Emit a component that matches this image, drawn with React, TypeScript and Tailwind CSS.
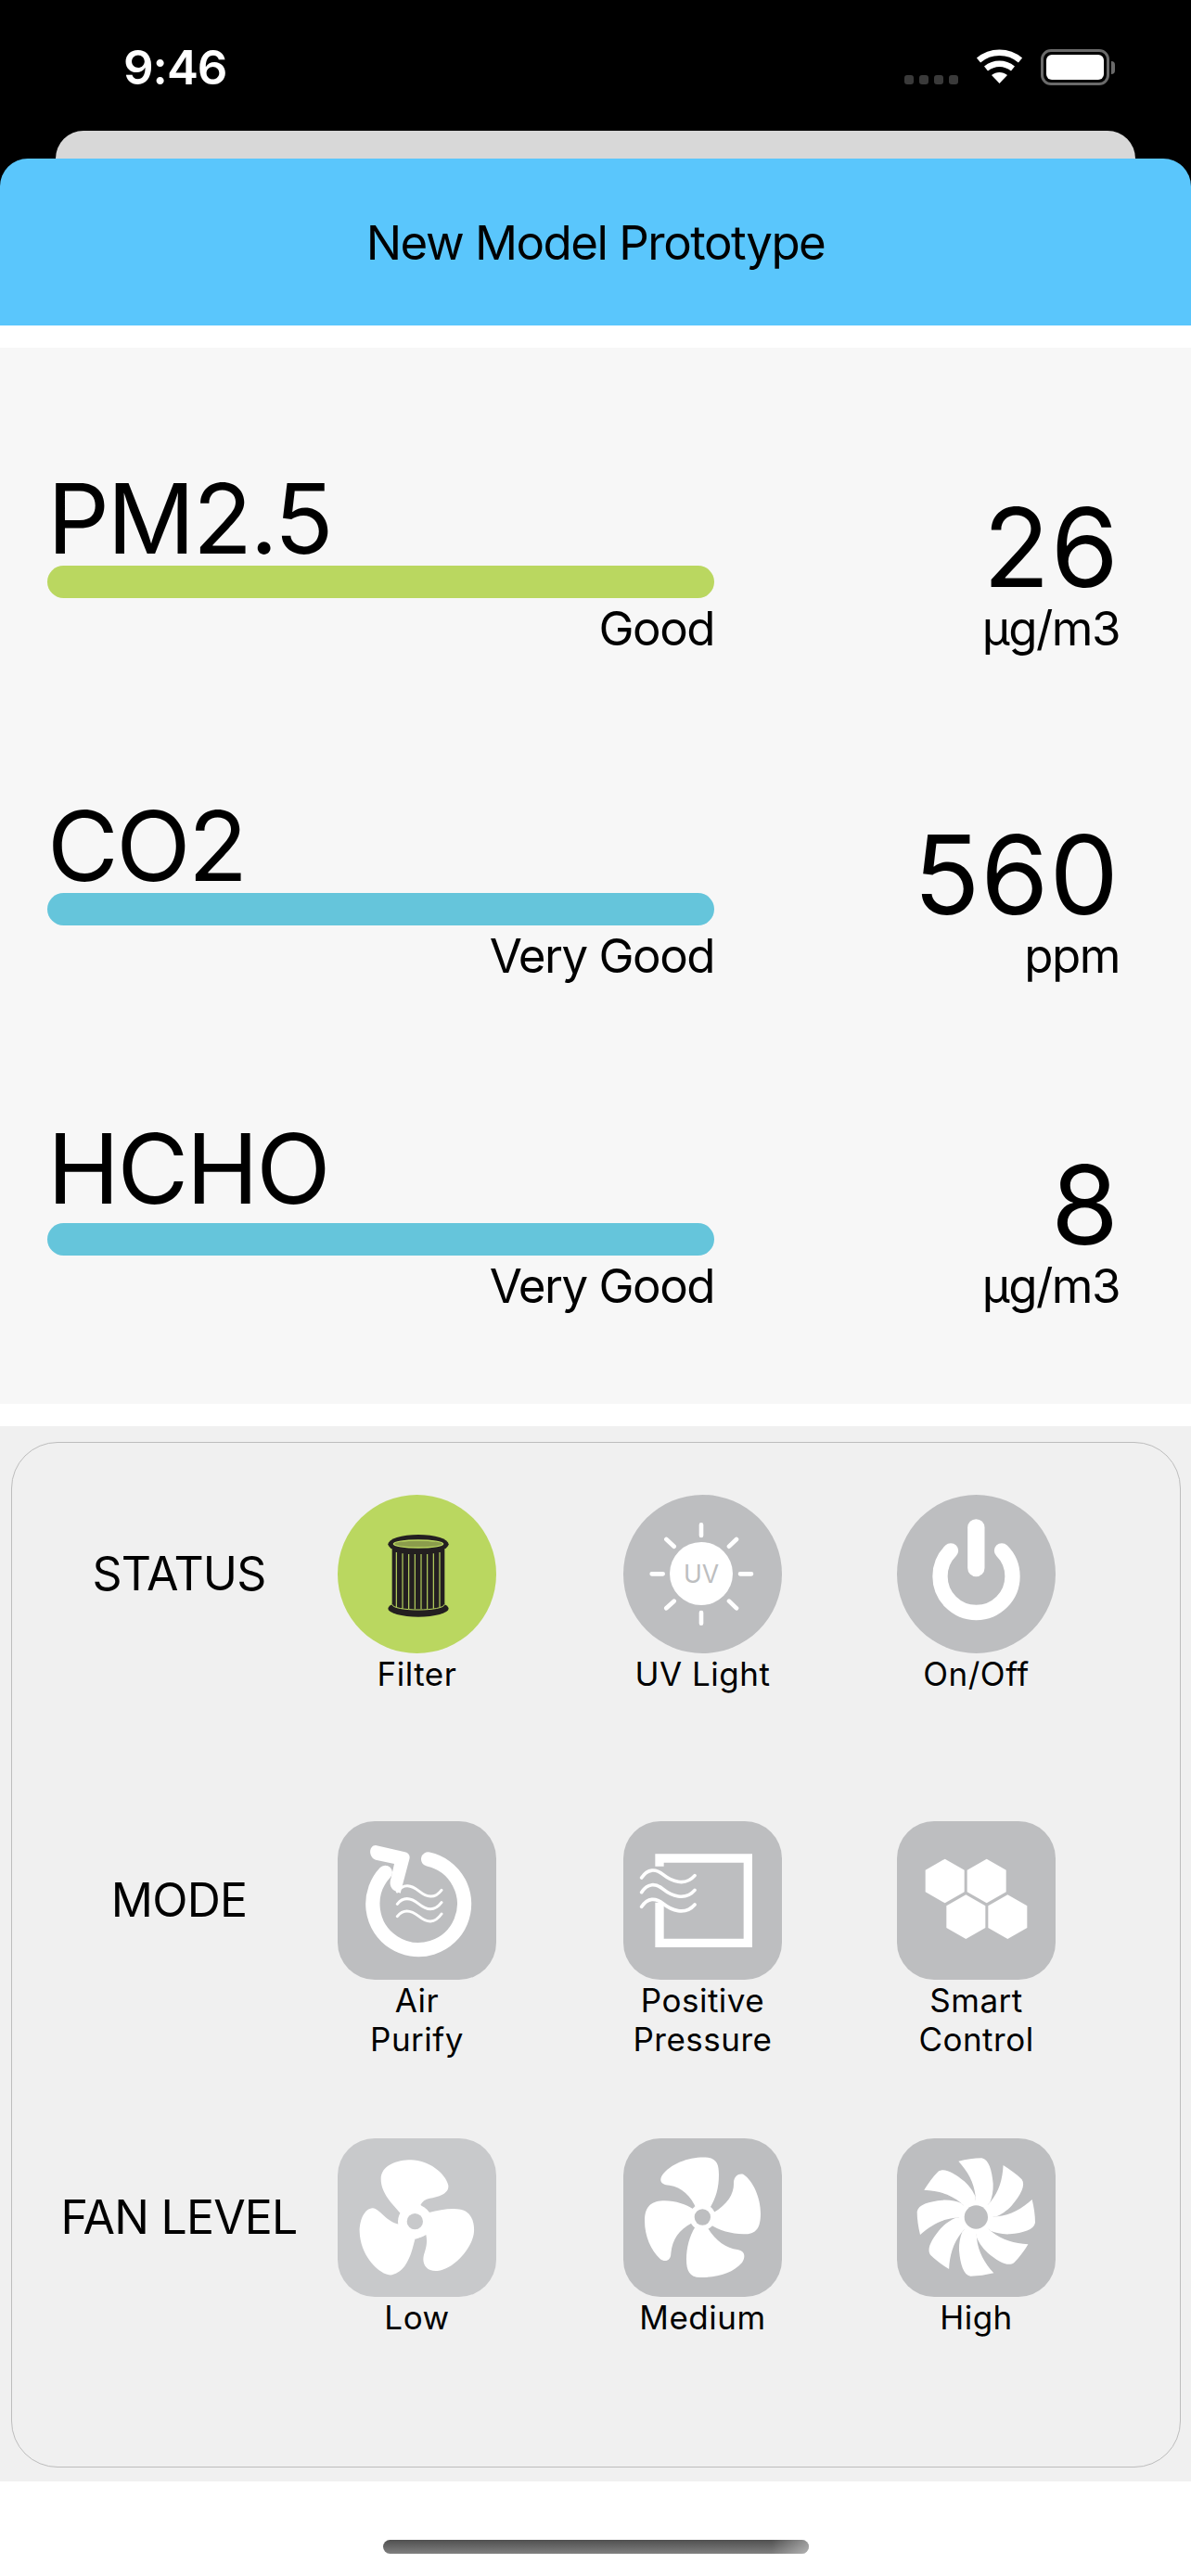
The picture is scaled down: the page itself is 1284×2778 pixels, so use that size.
const readings = [
  { name: 'PM2.5', bar: 'bg-[#bad760]', level: 'Good', value: '26', unit: 'µg/m3', rowGap: '', titleGap: '-mb-px', valueTop: 'pt-[28px]' },
  { name: 'CO2', bar: 'bg-[#65c5db]', level: 'Very Good', value: '560', unit: 'ppm', rowGap: 'mt-[156px]', titleGap: '-mb-px', valueTop: 'pt-[28px]' },
  { name: 'HCHO', bar: 'bg-[#65c5db]', level: 'Very Good', value: '8', unit: 'µg/m3', rowGap: 'mt-[151px]', titleGap: 'mb-[7px]', valueTop: 'pt-[36px]' },
];

const WHITE = '#ffffff';

const FilterIcon = () => (
  <svg viewBox="72 66 513 513" className="h-full w-full">
    <rect x="248" y="240" width="170" height="200" fill="#231f20" />
    <ellipse cx="333" cy="434" rx="98" ry="27" fill="#231f20" />
    <path d="M248 420C248 444 418 444 418 420" fill="none" stroke="#bad760" strokeWidth="3" />
    <path d="M262 252V430M282 256V434M302 258V436M322 258V436M342 258V436M362 258V436M382 256V434M402 252V430" stroke="#bad760" strokeWidth="3.5" />
    <ellipse cx="333" cy="226" rx="98" ry="31" fill="#231f20" />
    <ellipse cx="333" cy="225" rx="80" ry="12" fill="#8b9c4c" stroke="#bad760" strokeWidth="4" />
  </svg>
);

const UvIcon = () => (
  <svg viewBox="36 66 513 513" className="h-full w-full">
    <circle cx="288" cy="321" r="102" fill={WHITE} />
    <path d="M288 163V198M288 447V482M128 322H164M414 322H450M175 210L200 233M402 210L378 233M175 433L200 410M402 433L378 410" stroke={WHITE} strokeWidth="14" strokeLinecap="round" fill="none" />
    <text x="288" y="350" textAnchor="middle" fontSize="80" fill="#bdbec0" fontFamily="Inter, sans-serif">UV</text>
  </svg>
);

const PowerIcon = () => (
  <svg viewBox="921 66 513 513" className="h-full w-full">
    <path d="M1177 172V303" stroke={WHITE} strokeWidth="55" strokeLinecap="round" />
    <path d="M1095 247A117 117 0 1 0 1260 247" fill="none" stroke={WHITE} strokeWidth="49" strokeLinecap="round" />
  </svg>
);

const PurifyIcon = () => (
  <svg viewBox="72 72 513 513" className="h-full w-full">
    <path d="M365 195A148 148 0 1 1 226 238" fill="none" stroke={WHITE} strokeWidth="46" strokeLinecap="round" />
    <path d="M195 150L290 172C303 175 307 185 304 195L275 305L258 298C242 290 238 272 245 255L255 210L195 197C170 188 173 150 195 150Z" fill={WHITE} />
    <path d="M265 300C285 272 310 278 335 298S385 325 408 295M265 340C285 315 310 320 335 340S385 365 408 335M265 380C285 355 310 360 335 380S385 405 408 372" fill="none" stroke={WHITE} strokeWidth="9" strokeLinecap="round" />
  </svg>
);

const PressureIcon = () => (
  <svg viewBox="36 72 513 513" className="h-full w-full">
    <path d="M153 218V192H439V466H153V335" fill="none" stroke={WHITE} strokeWidth="28" />
    <path d="M95 255C115 225 140 225 165 245S235 285 267 248M95 302C115 272 140 272 165 292S235 332 267 295M95 349C115 319 140 319 165 339S235 379 267 342" fill="none" stroke={WHITE} strokeWidth="11" strokeLinecap="round" />
  </svg>
);

const SmartIcon = () => (
  <svg viewBox="921 72 513 513" className="h-full w-full" fill={WHITE}>
    <path d="M1076 194L1139 230V301L1076 337L1013 301V230Z" />
    <path d="M1211 194L1274 230V301L1211 337L1148 301V230Z" />
    <path d="M1144 310L1207 346V417L1144 453L1081 417V346Z" />
    <path d="M1279 310L1342 346V417L1279 453L1216 417V346Z" />
  </svg>
);

const LowFanIcon = () => (
  <svg viewBox="72 48 513 513" className="h-full w-full" fill={WHITE}>
    <circle cx="322" cy="317" r="55" />
    <path d="M275 290C250 262 212 225 212 180C212 135 265 118 310 118C365 118 420 160 430 200C433 228 395 238 370 242C355 245 345 252 340 264L368 288L322 317Z" />
    <path d="M368 288C400 280 440 272 470 278C505 285 515 320 513 350C510 400 450 470 395 477C360 480 345 455 350 430C352 415 365 395 358 360L322 375L322 317Z" />
    <path d="M322 375C315 400 310 430 290 460C275 480 255 492 238 490C195 480 145 420 143 350C143 310 160 275 185 274C210 276 230 320 270 326L322 317Z" />
    <circle cx="322" cy="317" r="26" fill="#c8c9cb" />
  </svg>
);

const MediumFanIcon = () => (
  <svg viewBox="36 48 513 513" className="h-full w-full" fill={WHITE}>
    <circle cx="292" cy="303" r="42" />
    <path d="M272 275C255 235 225 205 185 200C165 200 150 190 160 170C190 125 260 105 310 110C340 115 345 135 345 165C345 210 335 240 318 270L292 303Z" />
    <path d="M328 288C375 260 395 225 393 190C395 170 410 160 425 165C455 185 480 240 480 290C480 340 465 358 425 358C385 358 345 345 318 328L292 303Z" />
    <path d="M310 340C335 380 370 405 405 408C430 412 432 430 420 450C390 485 340 498 285 498C250 498 240 475 240 440C240 400 250 365 268 335L292 303Z" />
    <path d="M258 322C215 345 195 375 190 420C190 445 170 450 155 438C125 410 105 365 105 315C105 265 130 250 170 250C205 250 240 262 262 277L292 303Z" />
    <circle cx="292" cy="303" r="26" fill="#bdbec0" />
  </svg>
);

const HighFanIcon = () => (
  <svg viewBox="921 48 513 513" className="h-full w-full" fill={WHITE}>
    <circle cx="1177" cy="303" r="55" />
    {[0, 45, 90, 135, 180, 225, 270, 315].map((deg) => (
      <path
        key={deg}
        transform={`rotate(${deg} 1177 303)`}
        d="M1120 122C1145 116 1170 112 1195 112C1218 116 1228 150 1232 195C1233 220 1228 240 1222 255L1177 303L1175 235C1170 190 1150 155 1120 122Z"
      />
    ))}
    <circle cx="1177" cy="303" r="38" fill="#bdbec0" />
  </svg>
);

const rows = [
  {
    title: 'STATUS',
    height: 'h-[352px]',
    items: [
      { lines: ['Filter'], shape: 'rounded-full bg-[#bad760]', icon: <FilterIcon /> },
      { lines: ['UV Light'], shape: 'rounded-full bg-[#bdbec0]', icon: <UvIcon /> },
      { lines: ['On/Off'], shape: 'rounded-full bg-[#bdbec0]', icon: <PowerIcon /> },
    ],
  },
  {
    title: 'MODE',
    height: 'h-[342px]',
    items: [
      { lines: ['Air', 'Purify'], shape: 'rounded-[40px] bg-[#bdbec0]', icon: <PurifyIcon /> },
      { lines: ['Positive', 'Pressure'], shape: 'rounded-[40px] bg-[#bdbec0]', icon: <PressureIcon /> },
      { lines: ['Smart', 'Control'], shape: 'rounded-[40px] bg-[#bdbec0]', icon: <SmartIcon /> },
    ],
  },
  {
    title: 'FAN LEVEL',
    height: 'h-[213px]',
    items: [
      { lines: ['Low'], shape: 'rounded-[40px] bg-[#c8c9cb]', icon: <LowFanIcon /> },
      { lines: ['Medium'], shape: 'rounded-[40px] bg-[#bdbec0]', icon: <MediumFanIcon /> },
      { lines: ['High'], shape: 'rounded-[40px] bg-[#bdbec0]', icon: <HighFanIcon /> },
    ],
  },
];

const StatusBar = () => (
  <div className="flex h-[141px] items-start justify-between pl-[133px] pr-[82px] pt-[43px]">
    <span className="text-[51px] font-semibold leading-[60px] tracking-[-1px] text-white">9:46</span>
    <div className="mt-[10px] flex items-start">
      {/* signal */}
      <div className="mt-[28px] flex gap-[6px]">
        <div className="h-[10px] w-[10px] rounded-[3px] bg-[#3a3a3a]" />
        <div className="h-[10px] w-[10px] rounded-[3px] bg-[#3a3a3a]" />
        <div className="h-[10px] w-[10px] rounded-[3px] bg-[#3a3a3a]" />
        <div className="h-[10px] w-[10px] rounded-[3px] bg-[#3a3a3a]" />
      </div>
      {/* wifi */}
      <svg viewBox="0 0 51 37" className="ml-[19px] h-[37px] w-[51px]" fill="none" stroke="#ffffff" strokeWidth="6.5">
        <path d="M3 12C16 1 35 1 48 12" />
        <path d="M11 21C20 14 31 14 40 21" />
        <path d="M25.5 37L17 28C22 24 29 24 34 28Z" fill="#ffffff" stroke="none" />
      </svg>
      {/* battery */}
      <div className="ml-[19px] flex items-center">
        <div className="h-[39px] w-[74px] rounded-[11px] border-[3px] border-[#6a6a6a] p-[3px]">
          <div className="h-full w-full rounded-[6px] bg-white" />
        </div>
        <div className="ml-[2px] h-[14px] w-[4px] rounded-r-full bg-[#6a6a6a]" />
      </div>
    </div>
  </div>
);

export default function App() {
  return (
    <div className="flex h-[2778px] w-[1284px] flex-col overflow-hidden bg-white font-['Inter',sans-serif] text-black">
      <div className="bg-black">
        <StatusBar />
        <div className="mx-[60px] h-[30px] rounded-t-[30px] bg-[#d8d8d8]" />
      </div>

      <div className="bg-black">
        <div className="flex h-[180px] items-center justify-center rounded-t-[30px] bg-[#5ac6fc] text-[51px] leading-none tracking-[-1.5px]">
          New Model Prototype
        </div>
      </div>

      {/* readings */}
      <div className="mt-[24px] h-[1139px] bg-[#f7f7f7] pl-[51px] pr-[77px] pt-[131px]">
        {readings.map((r) => (
          <div key={r.name} className={`flex items-start justify-between ${r.rowGap}`}>
            <div className="w-[719px]">
              <div className={`text-[105px] leading-none tracking-[-2.5px] ${r.titleGap}`}>{r.name}</div>
              <div className={`h-[35px] rounded-full ${r.bar}`} />
              <div className="mt-[7px] text-right text-[51px] leading-none tracking-[-1.5px]">{r.level}</div>
            </div>
            <div className={`text-right ${r.valueTop}`}>
              <div className="text-[118px] leading-[112px] tracking-[1px]">{r.value}</div>
              <div className="mt-[6px] text-[51px] leading-none tracking-[-1.5px]">{r.unit}</div>
            </div>
          </div>
        ))}
      </div>

      {/* controls */}
      <div className="mt-[24px] h-[1138px] bg-[#f0f0f0] pl-[12px] pr-[11px] pt-[17px]">
        <div className="h-[1106px] rounded-[50px] border border-[#bdbdbd] pl-[20px] pt-[56px]">
          {rows.map((row) => (
            <div key={row.title} className={`grid grid-cols-[331px_308px_295px_171px] ${row.height}`}>
              <div className="flex h-[171px] w-[320px] items-center justify-center text-[50px] tracking-[-0.8px]">{row.title}</div>
              {row.items.map((item) => (
                <div key={item.lines[0]} className="w-[171px]">
                  <div className={`h-[171px] w-[171px] overflow-hidden ${item.shape}`}>{item.icon}</div>
                  <div className="mt-px text-center text-[35px] leading-[42px] tracking-[0.5px]">
                    {item.lines.map((line) => (
                      <div key={line}>{line}</div>
                    ))}
                  </div>
                </div>
              ))}
            </div>
          ))}
        </div>
      </div>

      {/* home indicator */}
      <div className="flex flex-1 justify-center pt-[63px]">
        <div className="relative h-[15px] w-[459px] overflow-hidden rounded-full bg-linear-to-b from-[#505050] to-[#808080]">
          <div className="absolute inset-y-0 right-0 w-[40px] bg-linear-to-r from-transparent to-white/40" />
        </div>
      </div>
    </div>
  );
}
